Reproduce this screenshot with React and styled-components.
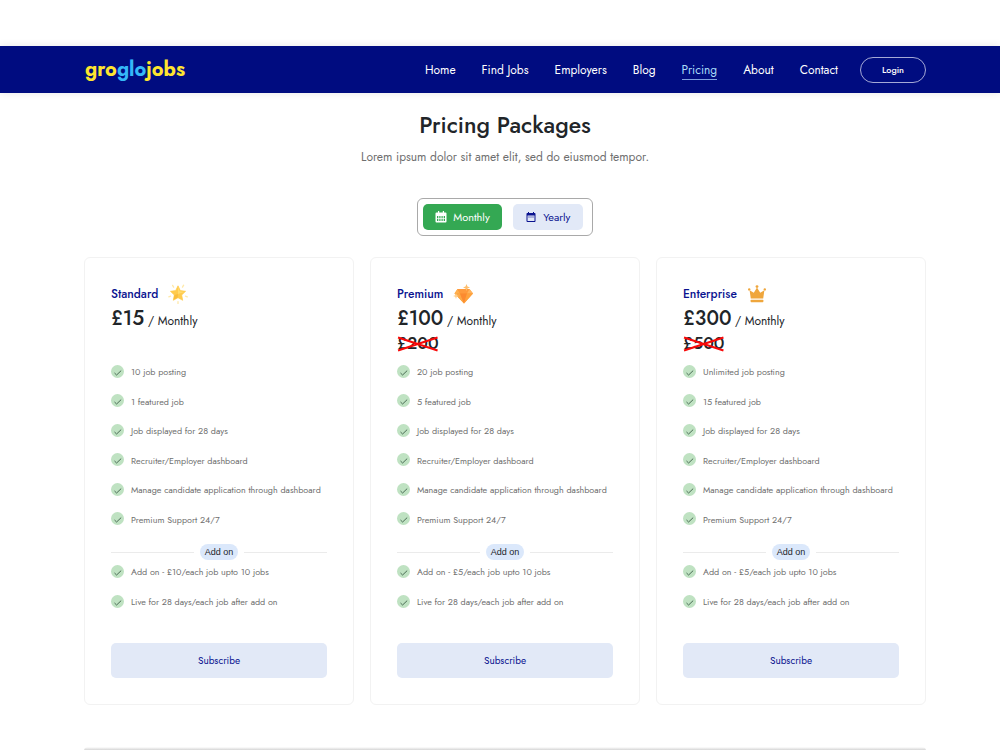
import React, { useState } from 'react'
import styled, { createGlobalStyle } from 'styled-components'
import { MdDateRange } from 'react-icons/md'

const links = ['Home', 'Find Jobs', 'Employers', 'Blog', 'Pricing', 'About', 'Contact']

const common = [
  'Job displayed for 28 days',
  'Recruiter/Employer dashboard',
  'Manage candidate application through dashboard',
  'Premium Support 24/7',
]

const plans = [
  {
    name: 'Standard',
    icon: <StarIcon />,
    price: '£15',
    features: ['10 job posting', '1 featured job', ...common],
    addon: 'Add on - £10/each job upto 10 jobs',
  },
  {
    name: 'Premium',
    icon: <DiamondIcon />,
    price: '£100',
    old: '£200',
    features: ['20 job posting', '5 featured job', ...common],
    addon: 'Add on - £5/each job upto 10 jobs',
  },
  {
    name: 'Enterprise',
    icon: <CrownIcon />,
    price: '£300',
    old: '£500',
    features: ['Unlimited job posting', '15 featured job', ...common],
    addon: 'Add on - £5/each job upto 10 jobs',
  },
]

function MonthIcon() {
  return (
    <svg width="12" height="12" viewBox="0 0 12 12" aria-hidden="true">
      <path d="M3 0h1.200v1.500h3.600V0H9v1.500h1.500a1 1 0 0 1 1 1V4H.5V2.500a1 1 0 0 1 1-1H3z" fill="currentColor" />
      <path
        d="M.5 4h11v6.500a1 1 0 0 1-1 1h-9a1 1 0 0 1-1-1zM2 5v5h1.300V5zM4.300 5v5h1.200V5zM6.500 5v5h1.200V5zM8.700 5v5H10V5z"
        fill="currentColor"
        fillRule="evenodd"
      />
      <path d="M1 7.500h10" stroke="currentColor" strokeWidth=".7" />
    </svg>
  )
}

function StarIcon() {
  return (
    <svg width="20" height="20" viewBox="0 0 20 20" aria-hidden="true">
      <g stroke="#ffe9a8" strokeWidth="1.3" strokeLinecap="round">
        <path d="M4.6 1.4l1 1.7M15.6 1.2l-1.1 1.9M.8 12.8l1.8-.6M17.5 12.2l1.8.7M10 17.6v1.8" />
      </g>
      <path d="M10 1.8l2.3 4.8 5.3.7-3.9 3.7 1 5.3-4.7-2.6-4.7 2.6 1-5.3-3.9-3.7 5.3-.7z" fill="#ffcb4d" stroke="#ffcb4d" strokeWidth=".7" strokeLinejoin="round" />
      <path d="M10 3l1.8 4.3 4.6.8-6.4 2z" fill="#ffdb6e" />
      <path d="M5.5 15.8l1-4.8L10 10l-.2 3.6z" fill="#f9bd3d" />
    </svg>
  )
}

function DiamondIcon() {
  return (
    <svg width="20" height="20" viewBox="0 0 20 20" aria-hidden="true">
      <path d="M4.5 5h12L20 9.5 11 19.5 1.5 9.500z" fill="#fb9a35" />
      <path d="M4.5 5l-3 4.500h5.500z" fill="#ffb04e" />
      <path d="M4.500 5h12l-2.500 4.500H7z" fill="#ff9a3c" />
      <path d="M16.500 5L20 9.500h-6z" fill="#ffb35c" />
      <path d="M1.500 9.500H7l4 10z" fill="#fda947" />
      <path d="M7 9.500h7l-3 10z" fill="#fc8a30" />
      <path d="M14 9.500h6l-9 10z" fill="#ffa23c" />
      <path d="M13.500 0l1 2.500 2.500 1-2.500 1-1 2.500-1-2.500-2.500-1 2.500-1z" fill="#ffbe6c" />
      <path d="M3 9l.8 2.200 2.200.8-2.200.8L3 15l-.8-2.200L0 12l2.200-.8z" fill="#ffcf8c" />
    </svg>
  )
}

function CrownIcon() {
  return (
    <svg width="20" height="20" viewBox="0 0 20 20" aria-hidden="true">
      <g fill="#efa63c">
        <path d="M2.6 6.2l4.200 2.600L10 3.600l3.200 5.200 4.200-2.600-1.200 8.200H3.800z" />
        <rect x="3.6" y="15.800" width="12.800" height="2.400" rx=".7" />
        <circle cx="2.2" cy="5.4" r="1.2" />
        <circle cx="10" cy="2.6" r="1.4" />
        <circle cx="17.8" cy="5.4" r="1.2" />
      </g>
    </svg>
  )
}

function Feature({ children }) {
  return (
    <li>
      <Tick viewBox="0 0 13 13" aria-hidden="true">
        <circle cx="6.5" cy="6.5" r="6.5" fill="#bfe2c2" />
        <path d="M3.5 8l2.100 2 4.600-4.400" fill="none" stroke="#3d5f48" strokeWidth="0.9" />
      </Tick>
      {children}
    </li>
  )
}

function Plan({ plan }) {
  return (
    <Card>
      <PlanName>
        {plan.name}
        {plan.icon}
      </PlanName>
      <Price>
        {plan.price}<span> / Monthly</span>
      </Price>
      <OldPriceRow>
        {plan.old && (
          <OldPrice>
            {plan.old}
            <svg viewBox="0 0 40 16" preserveAspectRatio="none" aria-hidden="true">
              <path d="M1 1.5l38 13M1 14.5l38-13" stroke="#f80808" strokeWidth="2" />
            </svg>
          </OldPrice>
        )}
      </OldPriceRow>
      <Features>
        {plan.features.map((f) => <Feature key={f}>{f}</Feature>)}
      </Features>
      <Divider><span>Add on</span></Divider>
      <AddonFeatures>
        <Feature>{plan.addon}</Feature>
        <Feature>Live for 28 days/each job after add on</Feature>
      </AddonFeatures>
      <Subscribe type="button">Subscribe</Subscribe>
    </Card>
  )
}

function App() {
  const [period, setPeriod] = useState('monthly')
  return (
    <>
      <GlobalStyle />
      <Header>
        <Logo href="#">gro<span>glo</span>jobs</Logo>
        <Menu>
          {links.map((link) => (
            <NavLink href="#" key={link} $active={link === 'Pricing'}>{link}</NavLink>
          ))}
        </Menu>
        <Login type="button">Login</Login>
      </Header>
      <Main>
        <Title>Pricing Packages</Title>
        <Subtitle>Lorem ipsum dolor sit amet elit, sed do eiusmod tempor.</Subtitle>
        <Toggle>
          <Period type="button" $active={period === 'monthly'} onClick={() => setPeriod('monthly')}>
            <MonthIcon /> Monthly
          </Period>
          <Period type="button" $active={period === 'yearly'} onClick={() => setPeriod('yearly')}>
            <MdDateRange size={12} /> Yearly
          </Period>
        </Toggle>
        <Cards>
          {plans.map((plan) => <Plan key={plan.name} plan={plan} />)}
        </Cards>
        <PageEdge />
      </Main>
    </>
  )
}

export default App

const GlobalStyle = createGlobalStyle`
* {
  box-sizing: border-box;
}
body {
  margin: 0;
  background: #fff;
  color: #212529;
  font-family: Jost, Lato, sans-serif;
}
button {
  font-family: inherit;
  cursor: pointer;
}
`
const Header = styled.header`
  display: flex;
  align-items: center;
  height: 47px;
  margin-top: 46px;
  padding: 0 74px 0 85px;
  background: #000c80;
  box-shadow: 0 0 8px rgba(0, 0, 0, 0.1);
`
const Logo = styled.a`
  color: #fee52f;
  font-size: 20px;
  line-height: 24px;
  font-weight: 700;
  text-decoration: none;

  span {
    color: #35b8f8;
  }
`
const Menu = styled.nav`
  display: flex;
  flex: 1;
  justify-content: flex-end;
  gap: 26px;
  margin-right: 22px;
  padding-top: 2px;
`
const NavLink = styled.a`
  color: ${(props) => (props.$active ? '#a9dcf8' : '#fff')};
  border-bottom: 1px solid ${(props) => (props.$active ? '#7f9fe0' : 'transparent')};
  font-size: 12px;
  line-height: 18px;
  text-decoration: none;
  white-space: nowrap;
`
const Login = styled.button`
  width: 66px;
  height: 26px;
  border: 1px solid #a5a9d6;
  border-radius: 13px;
  background: transparent;
  color: #fff;
  font-size: 9px;
  font-weight: 500;
`
const Main = styled.main`
  display: flex;
  flex-direction: column;
  align-items: center;
  padding: 16px 74px 0 84px;
`
const Title = styled.h1`
  margin: 0;
  font-size: 23px;
  line-height: 32px;
  font-weight: 500;
`
const Subtitle = styled.p`
  margin: 6px 0 31px;
  color: #6f6f6f;
  font-size: 12px;
  line-height: 20px;
`
const Toggle = styled.div`
  display: flex;
  gap: 11px;
  padding: 5px 9px 5px 5px;
  border: 1px solid #a9a9a9;
  border-radius: 6px;
`
const Period = styled.button`
  display: flex;
  align-items: center;
  justify-content: center;
  gap: 6px;
  min-width: 70px;
  height: 26px;
  padding: 0 12px;
  border: 0;
  border-radius: 5px;
  background: ${(props) => (props.$active ? '#34a853' : '#e2e9f7')};
  color: ${(props) => (props.$active ? '#fff' : '#0a1390')};
  font-size: 11px;
`
const Cards = styled.div`
  display: grid;
  grid-template-columns: repeat(3, 1fr);
  gap: 16px;
  width: 100%;
  margin-top: 21px;
`
const Card = styled.section`
  display: flex;
  flex-direction: column;
  padding: 25px 26px 26px;
  border: 1px solid #f2f2f2;
  border-radius: 6px;
`
const PlanName = styled.h2`
  display: flex;
  align-items: center;
  gap: 10px;
  margin: 0;
  color: #0a1390;
  font-size: 12px;
  line-height: 22px;
  font-weight: 500;
`
const Price = styled.p`
  margin: 2px 0 0;
  font-size: 20px;
  line-height: 24px;
  font-weight: 500;

  span {
    font-size: 12px;
    font-weight: 400;
  }
`
const OldPriceRow = styled.div`
  height: 25px;
`
const OldPrice = styled.del`
  position: relative;
  display: block;
  width: fit-content;
  font-size: 17px;
  line-height: 20px;
  font-weight: 500;
  text-decoration: none;

  svg {
    position: absolute;
    top: 3px;
    left: 0;
    width: 100%;
    height: 16px;
  }
`
const Features = styled.ul`
  display: flex;
  flex-direction: column;
  justify-content: space-between;
  min-height: 168px;
  margin: 4px 0 0;
  padding: 0;
  list-style: none;

  li {
    display: flex;
    align-items: center;
    gap: 7px;
    color: #6f6f6f;
    font-size: 9px;
    line-height: 20px;
    white-space: nowrap;
  }
`
const AddonFeatures = styled(Features)`
  min-height: 50px;
  margin-top: 2px;
`
const Tick = styled.svg`
  flex: none;
  width: 13px;
  height: 13px;
  margin-bottom: 2px;
`
const Divider = styled.div`
  display: flex;
  align-items: center;
  gap: 6px;
  margin-top: 14px;

  &::before,
  &::after {
    content: '';
    flex: 1;
    height: 1px;
    background: #ebebeb;
  }

  span {
    padding: 0 5px;
    border-radius: 8px;
    background: #dbe8fb;
    font-family: 'Liberation Sans', sans-serif;
    font-size: 9px;
    line-height: 16px;
  }
`
const Subscribe = styled.button`
  height: 35px;
  margin-top: 31px;
  border: 0;
  border-radius: 5px;
  background: #e2e9f7;
  color: #0a1390;
  font-size: 10px;
`
const PageEdge = styled.div`
  width: 100%;
  height: 4px;
  margin-top: 42px;
  border-radius: 8px 8px 0 0;
  background: linear-gradient(#fff, #c8c8c8);
`
